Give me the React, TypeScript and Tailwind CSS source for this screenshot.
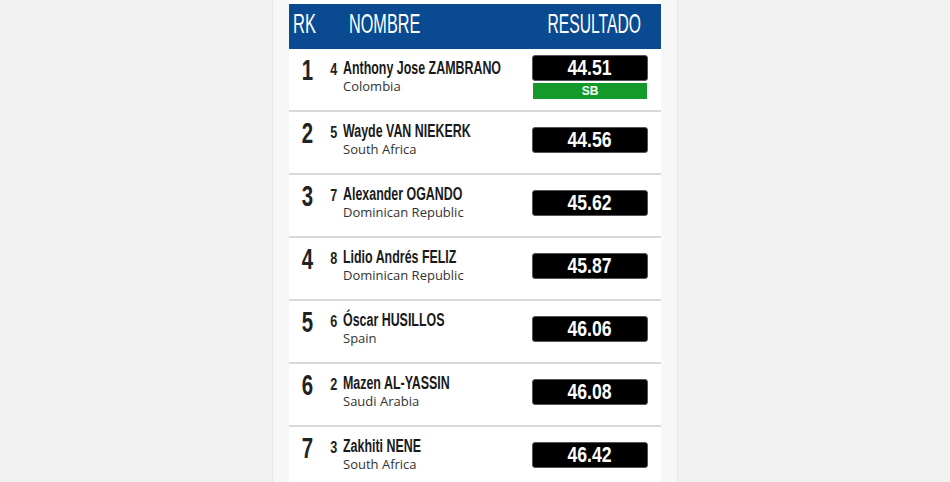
import React from 'react';

type Row = {
  rank: number;
  bib: number;
  name: string;
  country: string;
  mark: string;
  note?: string;
};

const rows: Row[] = [
  { rank: 1, bib: 4, name: 'Anthony Jose ZAMBRANO', country: 'Colombia', mark: '44.51', note: 'SB' },
  { rank: 2, bib: 5, name: 'Wayde VAN NIEKERK', country: 'South Africa', mark: '44.56' },
  { rank: 3, bib: 7, name: 'Alexander OGANDO', country: 'Dominican Republic', mark: '45.62' },
  { rank: 4, bib: 8, name: 'Lidio Andrés FELIZ', country: 'Dominican Republic', mark: '45.87' },
  { rank: 5, bib: 6, name: 'Óscar HUSILLOS', country: 'Spain', mark: '46.06' },
  { rank: 6, bib: 2, name: 'Mazen AL-YASSIN', country: 'Saudi Arabia', mark: '46.08' },
  { rank: 7, bib: 3, name: 'Zakhiti NENE', country: 'South Africa', mark: '46.42' },
];

// no condensed face installed, so squeeze Liberation Sans horizontally
const sans = "font-['Liberation_Sans',Arial,sans-serif]";

function ResultRow({ row }: { row: Row }) {
  return (
    <div className="flex h-[63px] border-b-2 border-[#d9d9d9]">
      <div className={`${sans} flex w-[36px] shrink-0 justify-center pt-[6px] text-[30px] font-bold leading-[30px] text-[#222]`}>
        <span className="inline-block scale-x-[0.68]">{row.rank}</span>
      </div>
      <div className="flex min-w-0 flex-1 pt-[10px]">
        <span className={`${sans} flex w-[18px] shrink-0 justify-center pt-[1px] text-[17px] font-bold leading-[19px] text-[#222]`}>
          <span className="inline-block scale-x-[0.74]">{row.bib}</span>
        </span>
        <div className="flex min-w-0 flex-col">
          <span className={`${sans} text-[18px] font-bold leading-[19px] text-[#1a1a1a]`}>
            <span className="inline-block origin-left scale-x-[0.69] whitespace-nowrap">{row.name}</span>
          </span>
          <span className="font-['Open_Sans',sans-serif] text-[13px] leading-[16px] text-[#333]">{row.country}</span>
        </div>
      </div>
      <div className="mr-[13px] flex w-[116px] shrink-0 flex-col self-center pb-[6px]">
        <div
          className={`${sans} flex h-[26px] items-center justify-center rounded-[3px] border border-[#555] bg-black text-[22px] font-bold text-white`}
        >
          <span className="inline-block scale-x-[0.8]">{row.mark}</span>
        </div>
        {row.note && (
          <div className={`${sans} mx-px mt-[2px] flex h-[16px] items-center justify-center bg-[#139a2b] text-[12px] font-bold text-white`}>
            {row.note}
          </div>
        )}
      </div>
    </div>
  );
}

export default function App() {
  return (
    <div className="flex h-[482px] w-[950px] justify-center overflow-hidden bg-[#f1f1f1]">
      <div className="border-x border-[#e6e6e6] bg-[#f7f7f7] px-[16px]">
        <div className="h-full w-[372px] bg-white pt-[4px]">
          <div className={`${sans} flex h-[45px] items-center bg-[#0a4a90] pb-[5px] text-[28px] text-white`}>
            <span className="w-[60px] pl-[4px]">
              <span className="inline-block origin-left scale-x-[0.59]">RK</span>
            </span>
            <span className="flex-1">
              <span className="inline-block origin-left scale-x-[0.58]">NOMBRE</span>
            </span>
            <span className="flex w-[160px] justify-end pr-[20px]">
              <span className="inline-block origin-right scale-x-[0.56] whitespace-nowrap">RESULTADO</span>
            </span>
          </div>
          {rows.map((r) => (
            <ResultRow key={r.rank} row={r} />
          ))}
        </div>
      </div>
    </div>
  );
}
